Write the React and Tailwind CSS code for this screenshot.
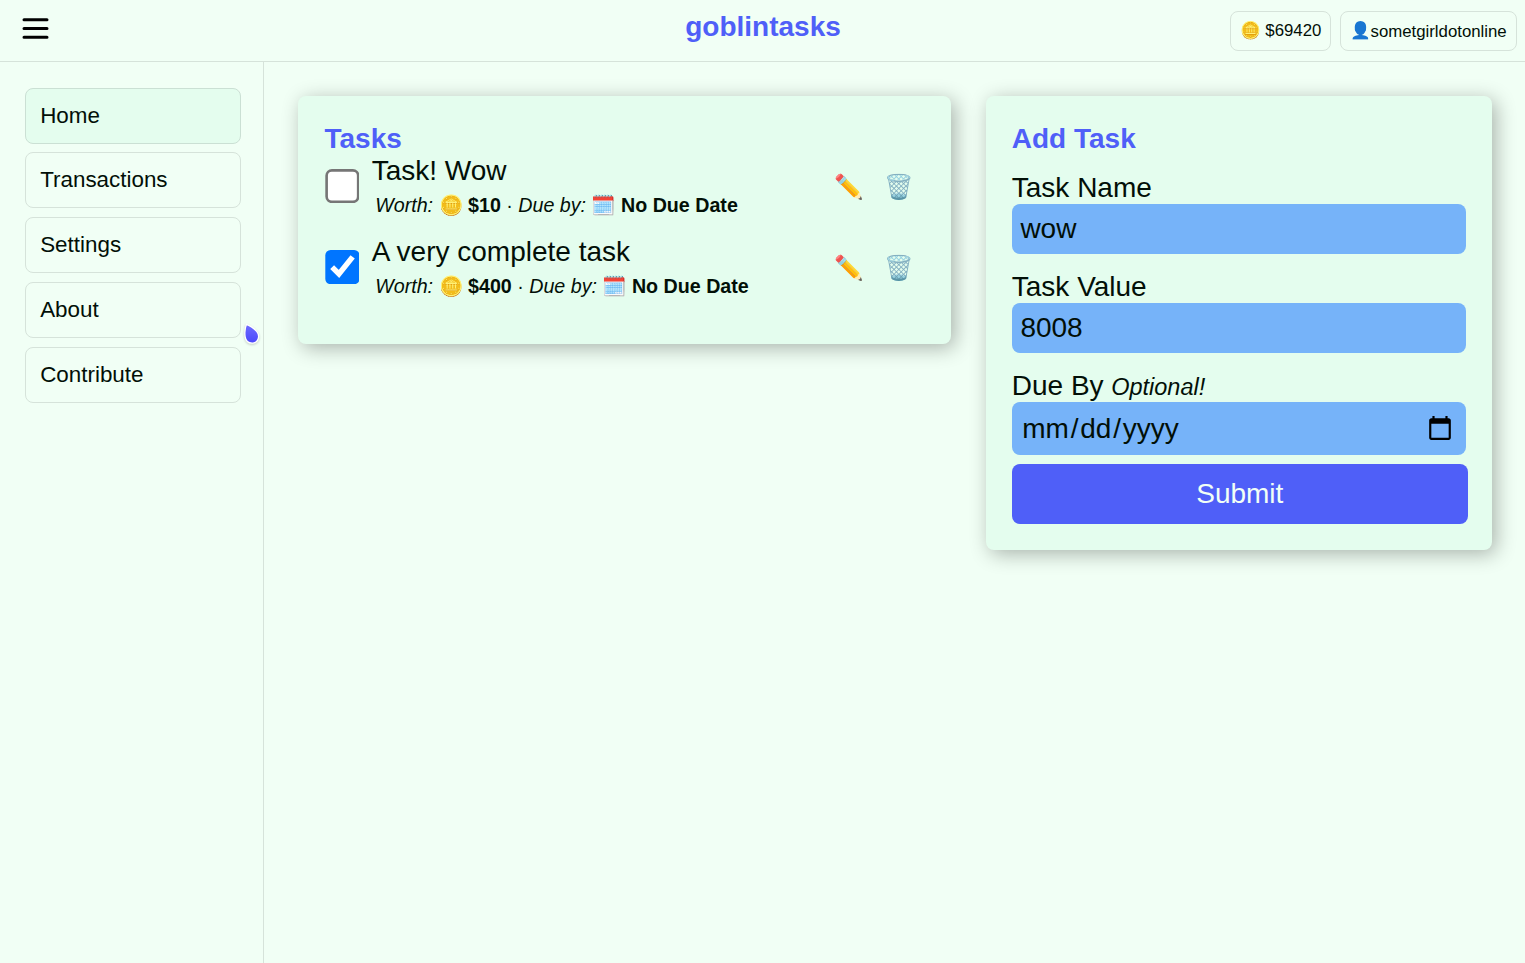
import React from 'react';

const NAV = ['Home', 'Transactions', 'Settings', 'About', 'Contribute'];
const TASKS = [
  { name: 'Task! Wow', worth: '$10', done: false },
  { name: 'A very complete task', worth: '$400', done: true },
];

function Header() {
  return (
    <header className="relative flex h-[62px] shrink-0 items-start justify-between border-b border-[#d6e3da]">
      <button aria-label="Menu" className="ml-[22px] mt-[16px]">
        <svg width="27" height="24" viewBox="0 0 27 24" stroke="#000" strokeWidth="3" strokeLinecap="round">
          <path d="M2 3.7H25M2 12.5H25M2 21.3H25" />
        </svg>
      </button>
      <h1 className="absolute inset-x-0 top-[11px] pl-px text-center text-[28px] leading-[32px] font-bold text-[#4f5ff8]">goblintasks</h1>
      <div className="relative mt-[11px] mr-[8px] flex gap-[9px] text-[16.8px]">
        <div className="flex h-[40px] w-[101px] items-center justify-center rounded-lg border border-[#d6e3da] whitespace-pre">🪙 $69420</div>
        <div className="flex h-[40px] w-[177px] items-center justify-center rounded-lg border border-[#d6e3da] pr-[0.8px]"><span>👤</span><span className="pt-[2px]">sometgirldotonline</span></div>
      </div>
    </header>
  );
}

function Task({ name, worth, done }) {
  return (
    <li className="flex h-[81px] items-start">
      <div className="mt-[14px] ml-px flex size-[34px] shrink-0 items-start justify-start">
        <input type="checkbox" defaultChecked={done} className="size-[13px] shrink-0 origin-top-left translate-x-[0.3px] scale-[2.63]" />
      </div>
      <div className="ml-[13px] flex-1">
        <div className="-ml-[0.3px] text-[28px] leading-[32px]">{name}</div>
        <div className="ml-[3.2px] mt-[7px] text-[19.66px] leading-[23px]">
          <i>Worth:</i> 🪙 <b>{worth}</b> · <i>Due by:</i> 🗓️ <b>No Due Date</b>
        </div>
      </div>
      <div className="mr-[11px] mt-[16px] flex gap-[20.5px] text-[23.8px] leading-[32px]">
        <button>✏️</button>
        <button>🗑️</button>
      </div>
    </li>
  );
}

function Field({ label, note, children }) {
  return (
    <label className="mb-[17px] block text-[28px] leading-[32px]">
      <span className="block h-[32px]">{label}{note && <i className="ml-[1px] text-[23.5px]"> {note}</i>}</span>
      {children}
    </label>
  );
}

export default function App() {
  return (
    <div className="flex h-screen flex-col overflow-hidden bg-[#f1fff5] font-['Liberation_Sans',sans-serif] text-[#020f07]">
      <Header />
      <div className="flex min-h-0 flex-1">
        <nav className="relative flex w-[264px] shrink-0 flex-col gap-[8.75px] border-r border-[#d6e3da] pt-[25.6px] pr-[22px] pl-[25px]">
          {NAV.map((item, i) => (
            <a key={item} className={`flex h-[56px] shrink-0 items-center rounded-lg border pb-[0.4px] pl-[14.2px] text-[22.4px] ${i === 0 ? 'border-[#cbe0d4] bg-[#e4fdee]' : 'border-[#d6e3da]'}`}>{item}</a>
          ))}
          <svg className="absolute top-[258px] left-[241px] drop-shadow-[0_1px_1px_rgba(0,0,0,0.2)]" width="22" height="28" viewBox="0 0 22 28">
            <defs>
              <linearGradient id="drop" x1="0" y1="0" x2="0" y2="1">
                <stop offset="0" stopColor="#6f6cff" />
                <stop offset="1" stopColor="#4a48fb" />
              </linearGradient>
            </defs>
            <path d="M5.4 4.4C9 5.6 13 8.4 15.9 11.6C19.3 16 17.3 22.5 12 23.1C7.6 23.4 4.7 20.6 4.1 16.6C3.6 12.4 4 7.6 5.4 4.4Z" fill="url(#drop)" stroke="#fff" strokeWidth="1.3" strokeLinejoin="round" />
          </svg>
        </nav>
        <main className="flex flex-1 items-start gap-[34.8px] pt-[34px] pl-[34px]">
          <section className="h-[248px] w-[653px] shrink-0 rounded-lg bg-[#e4fdee] px-[26px] pt-[26px] shadow-[4px_4px_20px_rgba(0,0,0,0.3)]">
            <h2 className="ml-[0.5px] text-[28px] leading-[33px] font-bold text-[#4f5ff8]">Tasks</h2>
            <ul>{TASKS.map((t) => <Task key={t.name} {...t} />)}</ul>
          </section>
          <section className="h-[454px] w-[506px] shrink-0 rounded-lg bg-[#e4fdee] px-[26px] pt-[26px] shadow-[4px_4px_20px_rgba(0,0,0,0.3)]">
            <h2 className="mb-[17px] text-[28px] leading-[33px] font-bold text-[#4f5ff8]">Add Task</h2>
            <Field label="Task Name">
              <input defaultValue="wow" className="block h-[50px] w-full rounded-lg bg-[#76b3f9] px-[8.6px]" />
            </Field>
            <Field label="Task Value">
              <input defaultValue="8008" className="block h-[50px] w-full rounded-lg bg-[#76b3f9] px-[8.6px]" />
            </Field>
            <Field label="Due By" note="Optional!">
              <input type="date" className="block h-[53px] w-full rounded-lg bg-[#76b3f9] px-[9.5px] [&::-webkit-datetime-edit-text]:px-[0.75px]" />
            </Field>
            <button className="-mt-[8px] h-[60px] w-[456px] rounded-lg bg-[#4f5ff8] text-[28px] text-[#f1fff6]">Submit</button>
          </section>
        </main>
      </div>
    </div>
  );
}
